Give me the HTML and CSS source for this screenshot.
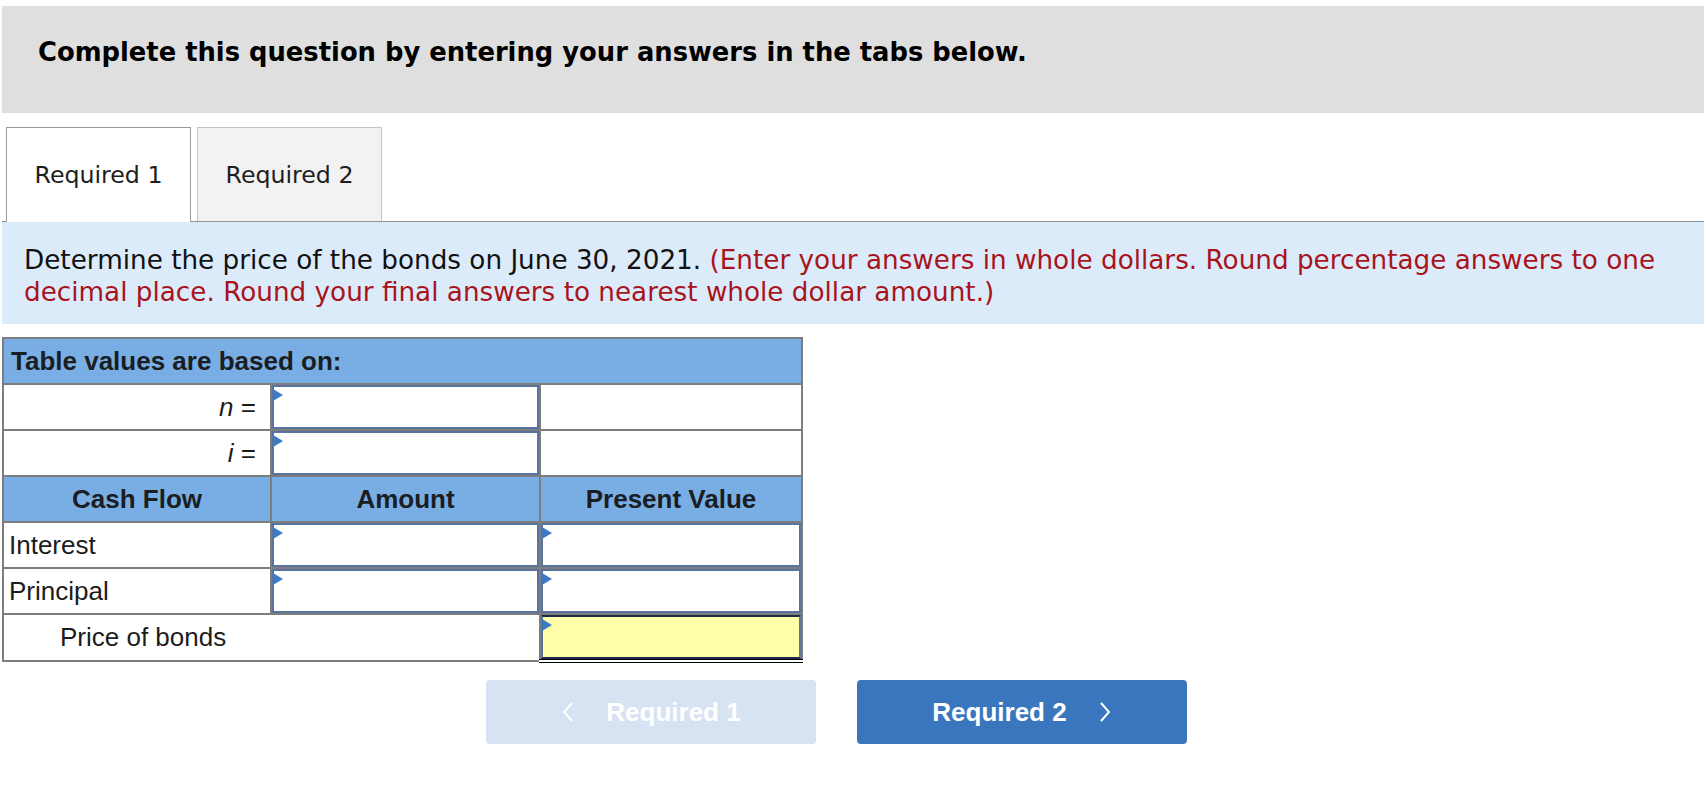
FILE: index.html
```html
<!DOCTYPE html>
<html lang="en">
<head>
<meta charset="utf-8">
<title>Bond price question</title>
<link rel="stylesheet" href="styles.css">
</head>
<body>
<div class="page">
  <div class="banner">
    <h1 class="banner-title">Complete this question by entering your answers in the tabs below.</h1>
  </div>

  <div class="tabs">
    <div class="tab tab-active">Required 1</div>
    <div class="tab tab-inactive">Required 2</div>
  </div>

  <div class="instructions">
    <span class="lead">Determine the price of the bonds on June 30, 2021.</span> <span class="hint">(Enter your answers in whole dollars. Round percentage answers to one decimal place. Round your final answers to nearest whole dollar amount.)</span>
  </div>

  <table class="grid">
    <colgroup>
      <col class="c1">
      <col class="c2">
      <col class="c3">
    </colgroup>
    <tr>
      <td class="head head-left" colspan="3">Table values are based on:</td>
    </tr>
    <tr>
      <td class="label-right"><i>n</i> =</td>
      <td class="inp"><div class="field"><span class="marker"></span></div></td>
      <td class="plain"></td>
    </tr>
    <tr>
      <td class="label-right"><i>i</i> =</td>
      <td class="inp"><div class="field"><span class="marker"></span></div></td>
      <td class="plain"></td>
    </tr>
    <tr>
      <td class="head">Cash Flow</td>
      <td class="head">Amount</td>
      <td class="head">Present Value</td>
    </tr>
    <tr>
      <td class="label">Interest</td>
      <td class="inp"><div class="field"><span class="marker"></span></div></td>
      <td class="inp"><div class="field"><span class="marker"></span></div></td>
    </tr>
    <tr>
      <td class="label">Principal</td>
      <td class="inp"><div class="field"><span class="marker"></span></div></td>
      <td class="inp"><div class="field"><span class="marker"></span></div></td>
    </tr>
    <tr>
      <td class="label label-indent" colspan="2">Price of bonds</td>
      <td class="inp total"><div class="field field-total"><span class="marker"></span></div></td>
    </tr>
  </table>

  <div class="nav">
    <button class="nav-btn nav-prev" type="button">
      <svg class="chev" width="14" height="22" viewBox="0 0 14 22"><path d="M11 2 L3 11 L11 20" fill="none" stroke="#ffffff" stroke-width="2"/></svg>
      <span>Required 1</span>
    </button>
    <button class="nav-btn nav-next" type="button">
      <span>Required 2</span>
      <svg class="chev" width="14" height="22" viewBox="0 0 14 22"><path d="M3 2 L11 11 L3 20" fill="none" stroke="#ffffff" stroke-width="2"/></svg>
    </button>
  </div>
</div>
</body>
</html>
```

FILE: styles.css
```css
html, body {
  margin: 0;
  padding: 0;
  background: #ffffff;
}

.page {
  padding: 6px 2px 0 2px;
  font-family: "DejaVu Sans", Verdana, sans-serif;
}

.banner {
  background: #dfdfdf;
  height: 107px;
  box-sizing: border-box;
  padding: 30px 36px 0 36px;
}

.banner-title {
  margin: 0;
  font-size: 25.8px;
  line-height: 32px;
  font-weight: bold;
  color: #000000;
}

.tabs {
  display: flex;
  gap: 6px;
  margin-top: 14px;
  padding-left: 4px;
  border-bottom: 1px solid #8c9296;
  height: 95px;
  box-sizing: border-box;
}

.tab {
  width: 185px;
  box-sizing: border-box;
  display: flex;
  align-items: center;
  justify-content: center;
  font-size: 23.7px;
  color: #1e1e1e;
}

.tab-active {
  background: #ffffff;
  border: 1px solid #9a9a9a;
  border-bottom: none;
  height: 95px;
  position: relative;
  z-index: 1;
}

.tab-inactive {
  background: #f2f2f2;
  border: 1px solid #c4c4c4;
  border-bottom: none;
  height: 94px;
}

.instructions {
  background: #dcebf9;
  padding: 22px 22px 16px 22px;
  font-size: 26.25px;
  line-height: 32px;
  color: #111111;
}

.hint {
  color: #a8141c;
}

.grid {
  margin-top: 13px;
  border-collapse: collapse;
  table-layout: fixed;
  width: 799px;
  font-family: "Liberation Sans", Arial, sans-serif;
  font-size: 26px;
  color: #1c1c1c;
}

.c1 { width: 268px; }
.c2 { width: 269px; }
.c3 { width: 262px; }

.grid td {
  border: 2px solid #7d7d7d;
  height: 44px;
  padding: 0;
  vertical-align: middle;
  background: #ffffff;
}

.grid td.head {
  background: #79aee4;
  font-weight: bold;
  text-align: center;
  color: #1a1d22;
}

.grid td.head-left {
  text-align: left;
  padding-left: 7px;
}

.grid td.label {
  padding-left: 5px;
}

.grid td.label-indent {
  padding-left: 56px;
}

.grid td.label-right {
  text-align: right;
  padding-right: 14px;
}

.field {
  position: relative;
  height: 44px;
  box-sizing: border-box;
  border: 2px solid #58739c;
  background: #ffffff;
}

.field-total {
  background: #ffffaa;
  border-top-color: #1d2b46;
  border-bottom-color: #1d2b46;
}

.grid td.total {
  border-bottom: 4px double #000000;
}

.marker {
  position: absolute;
  left: -1px;
  top: 2px;
  width: 0;
  height: 0;
  border-top: 6px solid transparent;
  border-bottom: 6px solid transparent;
  border-left: 10px solid #3b7bc6;
}

.nav {
  display: flex;
  gap: 41px;
  margin-top: 17px;
  margin-left: 484px;
}

.nav-btn {
  width: 330px;
  height: 64px;
  border: none;
  border-radius: 4px;
  display: flex;
  align-items: center;
  justify-content: center;
  gap: 31px;
  font-family: "Liberation Sans", Arial, sans-serif;
  font-weight: bold;
  font-size: 26px;
  color: #ffffff;
  padding: 0;
}

.nav-prev {
  background: #d7e3f2;
}

.nav-next {
  background: #3a76bd;
}

.chev {
  display: block;
}
```
